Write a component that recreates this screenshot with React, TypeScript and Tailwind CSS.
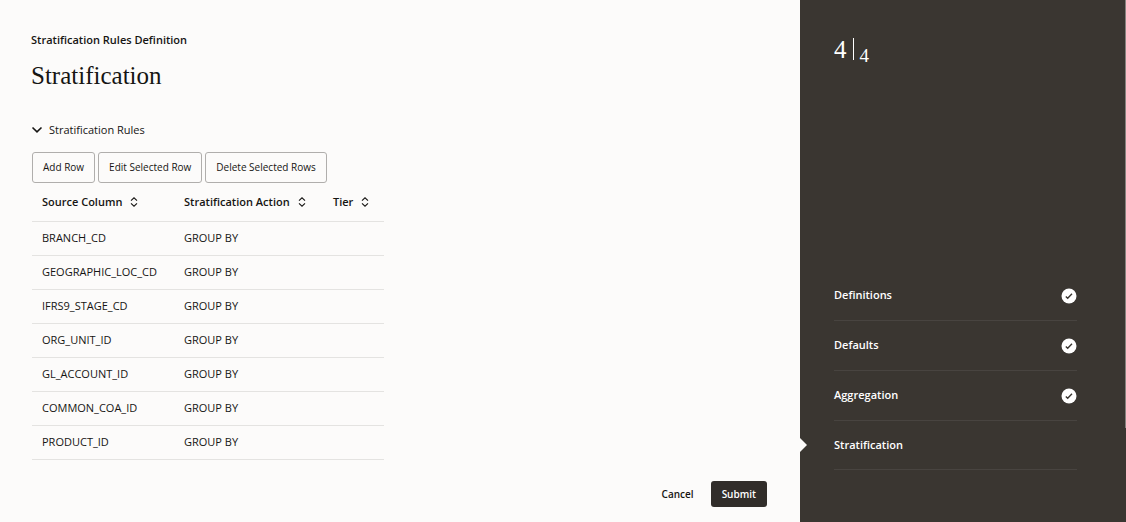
import { useState } from "react";

type Rule = {
  source: string;
  action: string;
  tier: string;
};

type Step = {
  label: string;
  done: boolean;
};

const rules: Rule[] = [
  { source: "BRANCH_CD", action: "GROUP BY", tier: "" },
  { source: "GEOGRAPHIC_LOC_CD", action: "GROUP BY", tier: "" },
  { source: "IFRS9_STAGE_CD", action: "GROUP BY", tier: "" },
  { source: "ORG_UNIT_ID", action: "GROUP BY", tier: "" },
  { source: "GL_ACCOUNT_ID", action: "GROUP BY", tier: "" },
  { source: "COMMON_COA_ID", action: "GROUP BY", tier: "" },
  { source: "PRODUCT_ID", action: "GROUP BY", tier: "" },
];

const steps: Step[] = [
  { label: "Definitions", done: true },
  { label: "Defaults", done: true },
  { label: "Aggregation", done: true },
  { label: "Stratification", done: false },
];

const actions = ["Add Row", "Edit Selected Row", "Delete Selected Rows"];

const SortIcon = () => (
  <svg width="8" height="10" viewBox="0 0 8 10" fill="none" stroke="currentColor" strokeWidth="1.1">
    <path d="M1 3.6 L4 0.8 L7 3.6" />
    <path d="M1 6.4 L4 9.2 L7 6.4" />
  </svg>
);

const CheckIcon = () => (
  <svg width="16" height="16" viewBox="0 0 16 16">
    <circle cx="8" cy="8" r="7.5" fill="#fff" />
    <path d="M4.8 8.4 L6.7 10.2 L11 5.8" fill="none" stroke="#3a3631" strokeWidth="1.4" />
  </svg>
);

const ColumnHeader = ({ title, width }: { title: string; width: string }) => (
  <th scope="col" className={`pl-2.5 text-left font-semibold ${width}`}>
    <button type="button" className="flex items-center gap-2 whitespace-nowrap">
      {title}
      <SortIcon />
    </button>
  </th>
);

const RulesTable = () => (
  <table className="w-[352px] table-fixed border-collapse text-[11px]">
    <thead>
      <tr className="h-[38px] border-b border-[#e4e3e1]">
        <ColumnHeader title="Source Column" width="w-[142px]" />
        <ColumnHeader title="Stratification Action" width="w-[149px]" />
        <ColumnHeader title="Tier" width="w-[61px]" />
      </tr>
    </thead>
    <tbody>
      {rules.map((rule) => (
        <tr key={rule.source} className="h-[34px] border-b border-[#e4e3e1]">
          <td className="pl-2.5">{rule.source}</td>
          <td className="pl-2.5">{rule.action}</td>
          <td className="pl-2.5">{rule.tier}</td>
        </tr>
      ))}
    </tbody>
  </table>
);

const Progress = () => (
  <aside className="relative flex w-[326px] shrink-0 flex-col justify-between bg-[#3a3631] pt-9 pr-[49px] pb-[52px] pl-[34px] text-white">
    {/* Current step / total */}
    <div className="flex items-start gap-1.5 font-['Liberation_Serif',serif]">
      <span className="text-[25px] leading-7">4</span>
      <span className="mt-0.5 h-[22px] w-px bg-white" />
      <span className="pt-2.5 text-[19px] leading-5">4</span>
    </div>

    <ol className="text-[11px] font-semibold">
      {steps.map((step) => (
        <li
          key={step.label}
          className="relative flex h-[50px] items-center justify-between border-b border-[#484440] last:h-[49px]"
        >
          {step.label}
          {step.done ? (
            <CheckIcon />
          ) : (
            <svg className="absolute top-1/2 -left-[34px] -translate-y-1/2" width="8" height="14" viewBox="0 0 8 14">
              <path d="M0 0 L7 7 L0 14 Z" fill="#fcfbfa" />
            </svg>
          )}
        </li>
      ))}
    </ol>

    {/* Scroll thumb on the window edge */}
    <div className="absolute top-0 right-0 h-[82%] w-px bg-[#85827e]" />
  </aside>
);

export default function App() {
  const [open, setOpen] = useState(true);

  return (
    <div className="flex min-h-screen bg-[#fcfbfa] font-['Open_Sans',sans-serif] text-[#161513]">
      <main className="flex flex-1 flex-col px-[31px] pt-8 pb-[15px]">
        <p className="text-[11px] leading-4 font-semibold">Stratification Rules Definition</p>
        <h1 className="mt-3 font-['Liberation_Serif',serif] text-[25px] leading-8">Stratification</h1>

        <button
          type="button"
          aria-expanded={open}
          onClick={() => setOpen(!open)}
          className="mt-[30px] flex items-center gap-1.5 self-start text-[11px] leading-4"
        >
          <svg width="12" height="8" viewBox="0 0 12 8" fill="none" stroke="currentColor" strokeWidth="1.6">
            <path d="M1.5 1.5 L6 5.8 L10.5 1.5" />
          </svg>
          Stratification Rules
        </button>

        {open && (
          <section className="mt-3.5 pl-px">
            <div className="flex gap-[3px]">
              {actions.map((action) => (
                <button
                  key={action}
                  type="button"
                  className="h-[31px] rounded-[3px] border border-[#b0aeac] px-2.5 text-[10px] font-medium"
                >
                  {action}
                </button>
              ))}
            </div>
            <RulesTable />
          </section>
        )}

        <div className="mt-auto flex items-center justify-end gap-[17px] text-[10px] font-semibold">
          <button type="button">Cancel</button>
          <button type="button" className="mr-0.5 h-[26px] rounded-[3px] bg-[#312d2a] px-[11px] text-white">
            Submit
          </button>
        </div>
      </main>
      <Progress />
    </div>
  );
}
